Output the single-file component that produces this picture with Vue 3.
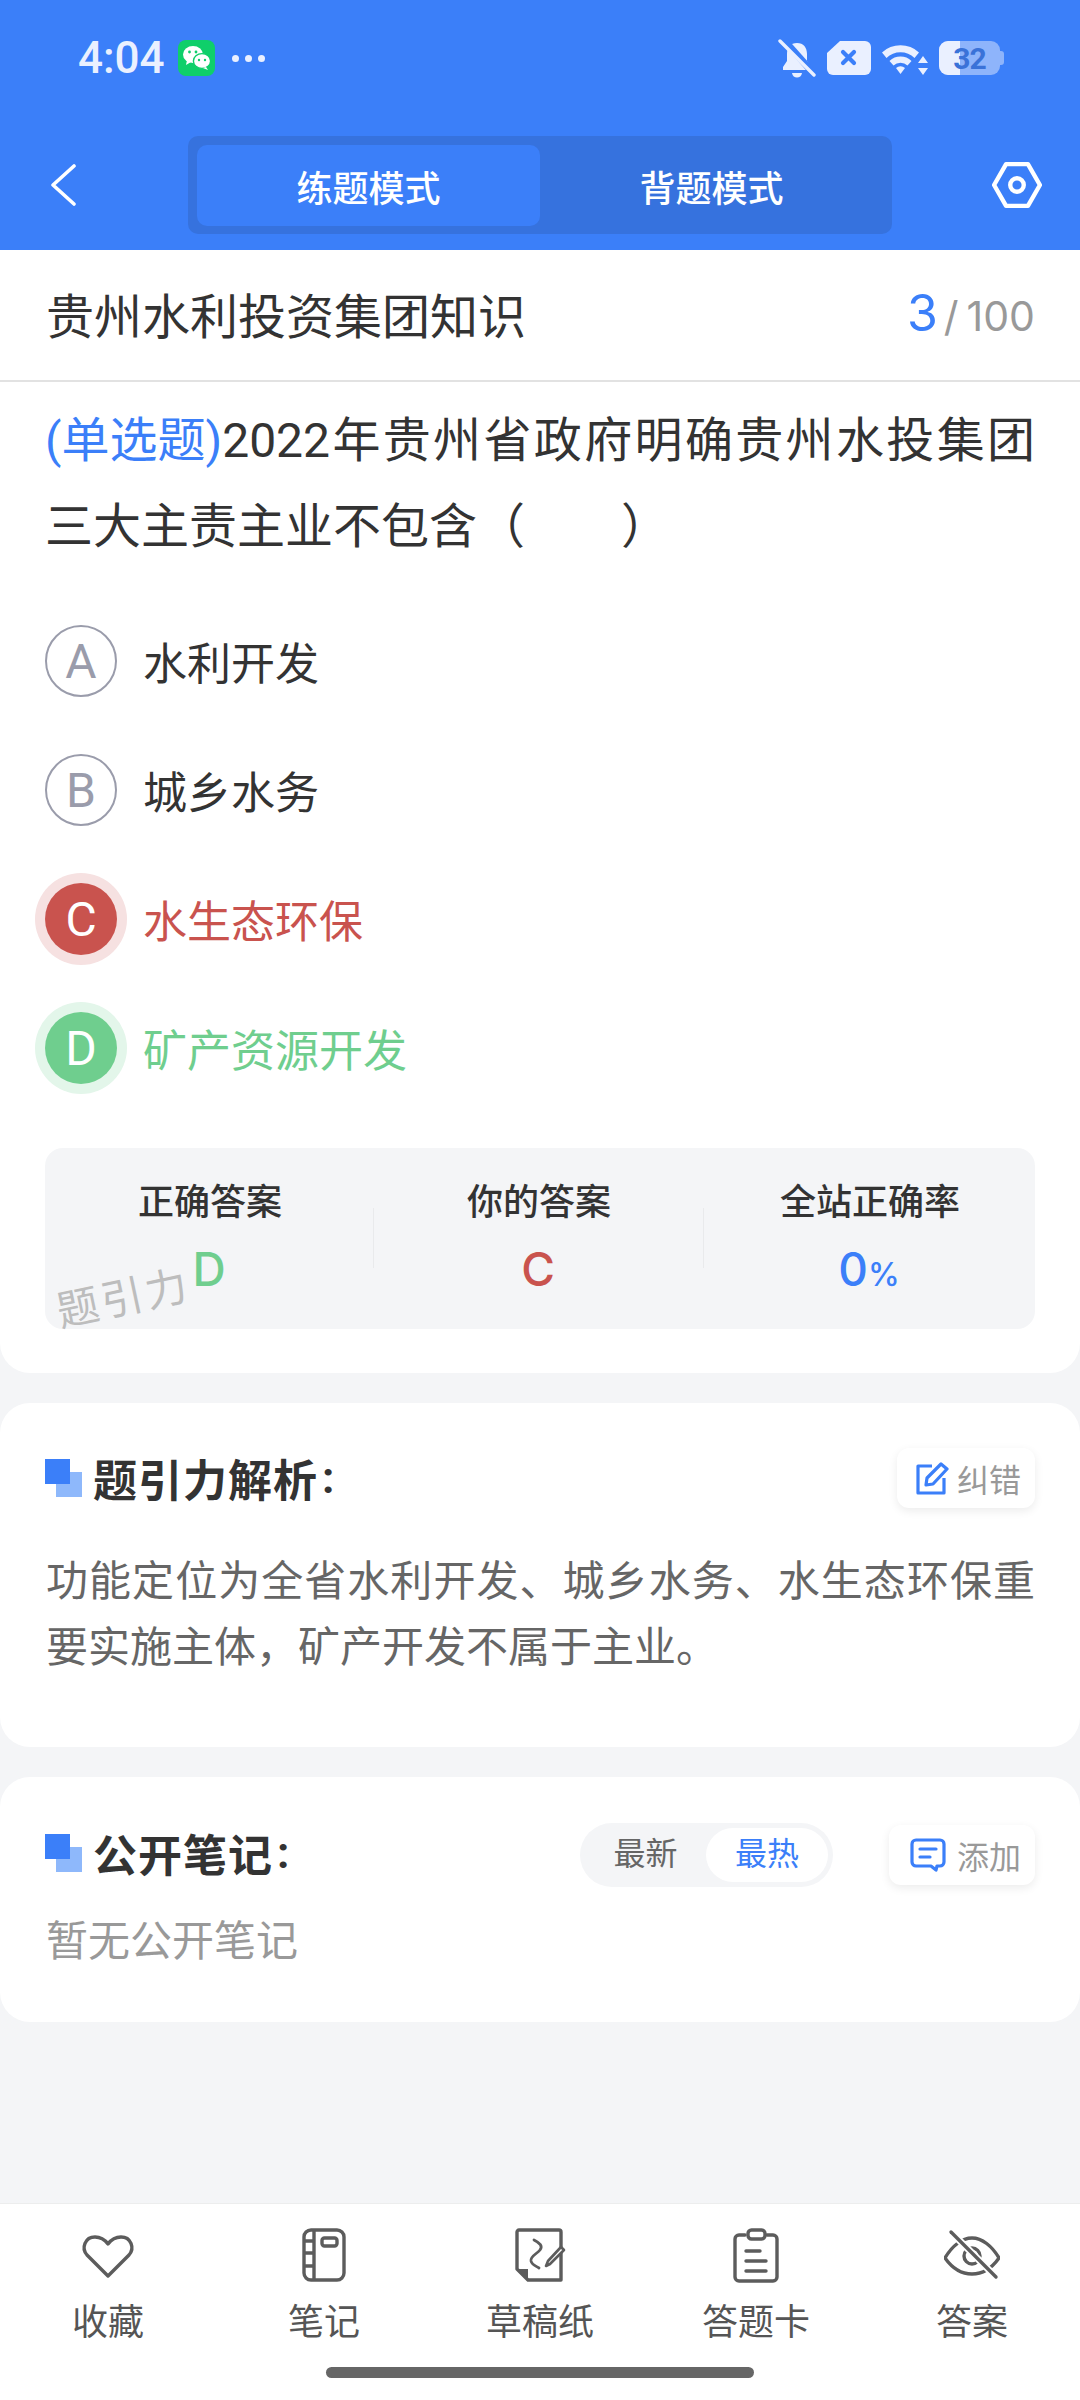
<template>
  <div class="page">
    <header class="top">
      <div class="status">
        <div class="status-left">
          <span class="time">4:04</span>
          <svg class="wechat" viewBox="0 0 37 36" width="37" height="36">
            <rect width="37" height="36" rx="8" fill="#0fcf6a" />
            <ellipse cx="15" cy="14.5" rx="10" ry="8.5" fill="#fff" />
            <path d="M9 20l-1 5 5-3z" fill="#fff" />
            <ellipse cx="24" cy="21" rx="8.6" ry="7.4" fill="#fff" stroke="#0fcf6a" stroke-width="1.4" />
            <path d="M28 27l2 3-5-2z" fill="#fff" />
            <circle cx="11.5" cy="12" r="1.4" fill="#0fcf6a" />
            <circle cx="18" cy="12" r="1.4" fill="#0fcf6a" />
            <circle cx="21" cy="20" r="1.2" fill="#0fcf6a" />
            <circle cx="27" cy="20" r="1.2" fill="#0fcf6a" />
          </svg>
          <span class="dots"><i></i><i></i><i></i></span>
        </div>
        <div class="status-right">
          <svg viewBox="0 0 38 40" width="38" height="40">
            <path d="M19 5c6.500 0 10 4.500 10 11v7l4 6v3H5v-3l4-6v-7c0-6.500 3.500-11 10-11z" fill="#eaf0ff" />
            <path d="M14 35h10c-.5 3-2.500 4.500-5 4.500s-4.500-1.500-5-4.500z" fill="#eaf0ff" />
            <path d="M4 0l33 37" stroke="#3b7ff9" stroke-width="7" />
            <path d="M2 3l34 34" stroke="#eaf0ff" stroke-width="3.400" stroke-linecap="round" />
          </svg>
          <svg viewBox="0 0 44 34" width="44" height="34">
            <path d="M13 0h25a6 6 0 0 1 6 6v22a6 6 0 0 1-6 6H6a6 6 0 0 1-6-6V12z" fill="#eaf0ff" />
            <path d="M16 11l11 11M27 11L16 22" stroke="#3b7ff9" stroke-width="4.200" stroke-linecap="round" />
          </svg>
          <svg viewBox="0 0 46 33" width="46" height="33">
            <path d="M0 10.500a27 27 0 0 1 37 0l-4.500 5.500a20 20 0 0 0-28 0z" fill="#eaf0ff" />
            <path d="M7.500 19a16 16 0 0 1 22 0l-4 4.500a10 10 0 0 0-14 0z" fill="#eaf0ff" />
            <path d="M14 26a7 7 0 0 1 9 0l-4.500 6z" fill="#eaf0ff" />
            <path d="M41 14l5 7h-10zM41 33l-5-7h10z" fill="#eaf0ff" />
          </svg>
          <div class="battery">
            <div class="battery-body">
              <div class="battery-fill"></div>
              <span>32</span>
            </div>
            <div class="battery-nub"></div>
          </div>
        </div>
      </div>
      <nav class="nav">
        <svg class="back" viewBox="0 0 26 42" width="26" height="42">
          <path d="M24 2L3 21l21 19" fill="none" stroke="#fff" stroke-width="3.600" stroke-linecap="round" stroke-linejoin="round" />
        </svg>
        <div class="seg">
          <div class="seg-item on">练题模式</div>
          <div class="seg-item">背题模式</div>
        </div>
        <svg class="gear" viewBox="0 0 48 48" width="50" height="50">
          <path d="M13.500 4h21L46 24 34.500 44h-21L2 24z" fill="none" stroke="#fff" stroke-width="4.200" stroke-linejoin="round" />
          <circle cx="24" cy="24" r="6.500" fill="none" stroke="#fff" stroke-width="4.200" />
        </svg>
      </nav>
    </header>

    <main class="main">
      <section class="card first">
        <div class="title-row">
          <span class="title">贵州水利投资集团知识</span>
          <span class="count"><b>3</b><em>/</em>100</span>
        </div>
        <div class="q-body">
          <p class="question"><span class="q-type">(单选题)</span>2022年贵州省政府明确贵州水投集团三大主责主业不包含（　　）</p>
          <ul class="options">
            <li v-for="o in options" :key="o.key" class="option" :class="o.state">
              <span class="letter">{{ o.key }}</span>
              <span>{{ o.text }}</span>
            </li>
          </ul>
          <div class="result">
            <div class="result-col">
              <div class="result-label">正确答案</div>
              <div class="result-val green">D</div>
            </div>
            <div class="result-col">
              <div class="result-label">你的答案</div>
              <div class="result-val red">C</div>
            </div>
            <div class="result-col">
              <div class="result-label">全站正确率</div>
              <div class="result-val blue">0<small>%</small></div>
            </div>
            <span class="mark">题引力</span>
          </div>
        </div>
      </section>

      <section class="card analysis">
        <div class="head">
          <h2 class="heading"><span class="squares"></span>题引力解析<span class="colon">:</span></h2>
          <div class="chip">
            <svg viewBox="0 0 34 34" width="34" height="34">
              <path d="M17 5H3v27h26V17" fill="none" stroke="#3b7ff9" stroke-width="3.200" stroke-linejoin="round" />
              <path d="M11 24l1-7L26 3l6 5-14 15z" fill="none" stroke="#3b7ff9" stroke-width="3.200" stroke-linejoin="round" />
            </svg>
            纠错
          </div>
        </div>
        <p class="text">功能定位为全省水利开发、城乡水务、水生态环保重要实施主体，矿产开发不属于主业。</p>
      </section>

      <section class="card notes">
        <div class="head">
          <h2 class="heading"><span class="squares"></span>公开笔记<span class="colon">:</span></h2>
          <div class="head-right">
            <div class="sort">
              <span class="sort-item">最新</span>
              <span class="sort-item on">最热</span>
            </div>
            <div class="chip wide">
              <svg viewBox="0 0 36 34" width="36" height="34">
                <path d="M6 2h24a4 4 0 0 1 4 4v18a4 4 0 0 1-4 4h-3l-1 4-5-4H6a4 4 0 0 1-4-4V6a4 4 0 0 1 4-4z" fill="none" stroke="#3b7ff9" stroke-width="3.200" stroke-linejoin="round" />
                <path d="M10 11h16M10 19h10" stroke="#3b7ff9" stroke-width="3.200" stroke-linecap="round" />
              </svg>
              添加
            </div>
          </div>
        </div>
        <p class="empty">暂无公开笔记</p>
      </section>
    </main>

    <footer class="bottom">
      <div class="tabs">
        <div class="tab">
          <svg viewBox="0 0 56 56" width="56" height="56">
            <path d="M28 48L7 27C1 20 5 9 15 9c6 0 10 3 13 7 3-4 7-7 13-7 10 0 14 11 8 18z" fill="none" stroke="#5c5c5c" stroke-width="3.400" stroke-linejoin="round" />
          </svg>
          <span>收藏</span>
        </div>
        <div class="tab">
          <svg viewBox="0 0 56 56" width="56" height="56">
            <rect x="8" y="2" width="40" height="50" rx="7" fill="none" stroke="#5c5c5c" stroke-width="3.400" />
            <path d="M18 2v50M8 13h10M8 25h10M8 38h10" stroke="#5c5c5c" stroke-width="3.400" />
            <rect x="26" y="10" width="15" height="8" rx="2.500" fill="none" stroke="#5c5c5c" stroke-width="3.400" />
          </svg>
          <span>笔记</span>
        </div>
        <div class="tab">
          <svg viewBox="0 0 56 56" width="56" height="56">
            <path d="M7 2h40a2 2 0 0 1 2 2v48H16L5 41V4a2 2 0 0 1 2-2z" fill="none" stroke="#5c5c5c" stroke-width="3.400" stroke-linejoin="round" />
            <path d="M5 41h11v11z" fill="#5c5c5c" />
            <path d="M22 12c6 3 9 6 6 10-3 4-10 6-9 11 1 4 5 5 8 7" fill="none" stroke="#5c5c5c" stroke-width="2.800" stroke-linecap="round" />
            <path d="M34 38l2-5 13-14 3 3-14 14z" fill="#fff" stroke="#5c5c5c" stroke-width="2.600" stroke-linejoin="round" />
          </svg>
          <span>草稿纸</span>
        </div>
        <div class="tab">
          <svg viewBox="0 0 56 56" width="56" height="56">
            <path d="M17 7h-6a4 4 0 0 0-4 4v38a4 4 0 0 0 4 4h34a4 4 0 0 0 4-4V11a4 4 0 0 0-4-4h-6" fill="none" stroke="#5c5c5c" stroke-width="3.400" stroke-linecap="round" />
            <rect x="20" y="2" width="17" height="9" rx="3.500" fill="none" stroke="#5c5c5c" stroke-width="3.400" />
            <path d="M18 23h14M18 33h20M18 43h20" stroke="#5c5c5c" stroke-width="3.400" stroke-linecap="round" />
          </svg>
          <span>答题卡</span>
        </div>
        <div class="tab">
          <svg viewBox="0 0 56 56" width="56" height="56">
            <path d="M1 30C8 18 18 10 28 10s20 8 27 20c-7 10-17 16-27 16S8 40 1 30z" fill="none" stroke="#5c5c5c" stroke-width="3.400" stroke-linejoin="round" />
            <circle cx="28" cy="28" r="8" fill="none" stroke="#5c5c5c" stroke-width="3.400" />
            <path d="M9 6l43 43" stroke="#fff" stroke-width="7" />
            <path d="M7 4l45 45" stroke="#5c5c5c" stroke-width="3.400" stroke-linecap="round" />
          </svg>
          <span>答案</span>
        </div>
      </div>
      <div class="home-bar"></div>
    </footer>
  </div>
</template>

<script setup>
const options = [
  { key: 'A', text: '水利开发', state: '' },
  { key: 'B', text: '城乡水务', state: '' },
  { key: 'C', text: '水生态环保', state: 'wrong' },
  { key: 'D', text: '矿产资源开发', state: 'right' }
]
</script>

<style>
html, body { margin: 0; padding: 0; }
</style>

<style scoped>
.page {
  width: 1080px;
  height: 2400px;
  display: flex;
  flex-direction: column;
  background: #f4f5f7;
  font-family: Roboto, "Noto Sans CJK SC", sans-serif;
  color: #333;
  overflow: hidden;
}
.top {
  height: 250px;
  background: #3b7ff9;
  flex: none;
}
.status {
  height: 116px;
  padding: 0 76px 0 78px;
  display: flex;
  align-items: center;
  justify-content: space-between;
}
.status-left,
.status-right {
  display: flex;
  align-items: center;
}
.time {
  font-size: 44px;
  font-weight: 500;
  color: #eaf0ff;
  width: 100px;
}
.wechat { display: block; }
.dots {
  display: flex;
  gap: 6px;
  margin-left: 17px;
}
.dots i {
  width: 7px;
  height: 7px;
  border-radius: 50%;
  background: #eaf0ff;
}
.status-right { gap: 11px; }
.battery {
  width: 65px;
  display: flex;
  align-items: center;
}
.battery-body {
  position: relative;
  width: 61px;
  height: 34px;
  flex: none;
  border-radius: 9px;
  background: #8eb4fb;
  overflow: hidden;
  font-size: 30px;
  font-weight: 700;
  color: #3a72d8;
  display: flex;
  align-items: center;
  justify-content: center;
}
.battery-nub {
  width: 4px;
  height: 14px;
  border-radius: 0 3px 3px 0;
  background: #8eb4fb;
}
.battery-fill {
  position: absolute;
  left: 0;
  top: 0;
  bottom: 0;
  width: 21px;
  background: #eaf0ff;
}
.battery span {
  position: relative;
  letter-spacing: -1px;
}
.nav {
  margin-top: 20px;
  height: 98px;
  display: flex;
  align-items: center;
  padding: 0 38px 0 50px;
}
.back { display: block; }
.seg {
  width: 704px;
  height: 98px;
  margin-left: 112px;
  margin-right: auto;
  box-sizing: border-box;
  padding: 9px 9px 8px;
  background: #3672de;
  border-radius: 10px;
  display: flex;
}
.seg-item {
  flex: 1;
  display: flex;
  align-items: center;
  justify-content: center;
  font-size: 36px;
  font-weight: 500;
  color: #fff;
  border-radius: 10px;
}
.seg-item.on { background: #3b7ff9; }
.main {
  flex: 1;
  display: flex;
  flex-direction: column;
  gap: 30px;
}
.card {
  background: #fff;
  border-radius: 30px;
}
.first {
  height: 1123px;
  border-radius: 0 0 30px 30px;
}
.title-row {
  height: 132px;
  box-sizing: border-box;
  padding: 0 45px 4px 46px;
  border-bottom: 2px solid #e2e2e2;
  display: flex;
  align-items: center;
  justify-content: space-between;
}
.title {
  font-size: 48px;
  color: #333;
}
.count {
  font-family: Inter, sans-serif;
  font-size: 41px;
  color: #999;
  display: flex;
  align-items: baseline;
}
.count b {
  font-size: 50px;
  font-weight: 400;
  color: #3b7ff9;
}
.count em {
  font-style: normal;
  margin: 0 8px 0 6px;
}
.q-body { padding: 16px 45px 0; }
.question {
  margin: 0;
  font-size: 48px;
  line-height: 86px;
  text-align: justify;
}
.q-type {
  display: inline-block;
  color: #3b7ff9;
}
.options {
  list-style: none;
  margin: 55px 0 0;
  padding: 0;
  display: flex;
  flex-direction: column;
  gap: 57px;
}
.option {
  height: 72px;
  display: flex;
  align-items: center;
  gap: 26px;
  font-size: 44px;
  color: #333;
}
.letter {
  width: 72px;
  height: 72px;
  flex: none;
  box-sizing: border-box;
  border: 2px solid #9a9cab;
  border-radius: 50%;
  display: flex;
  align-items: center;
  justify-content: center;
  font-size: 48px;
  color: #9a9cab;
}
.wrong { color: #c9534e; }
.wrong .letter {
  background: #c9534e;
  border: none;
  color: #fff;
  box-shadow: 0 0 0 10px #f6e1e1;
}
.right { color: #6fce8e; }
.right .letter {
  background: #6fce8e;
  border: none;
  color: #fff;
  box-shadow: 0 0 0 10px #e3f6ea;
}
.result {
  position: relative;
  margin-top: 64px;
  height: 181px;
  background: #f4f5f7;
  border-radius: 18px;
  display: grid;
  grid-template-columns: 328px 330px 332px;
}
.result-col {
  position: relative;
  text-align: center;
  padding-top: 29px;
}
.result-col + .result-col::before {
  content: "";
  position: absolute;
  left: 0;
  top: 60px;
  height: 60px;
  width: 1px;
  background: #e9eaec;
}
.result-label {
  padding-left: 2px;
  font-size: 36px;
  font-weight: 500;
  line-height: 52px;
  color: #333;
}
.result-val {
  margin-top: 12px;
  font-family: Inter, sans-serif;
  font-size: 46px;
  font-weight: 500;
  line-height: 56px;
}
.result-val small { font-size: 32px; }
.green { color: #6fce8e; }
.red { color: #c9534e; }
.blue { color: #3b7ff9; }
.mark {
  position: absolute;
  left: 11px;
  bottom: 5px;
  font-size: 42px;
  line-height: 50px;
  color: #bdbdbd;
  letter-spacing: 3px;
  transform: rotate(-12deg);
}
.analysis { height: 344px; padding: 45px 45px 0 46px; box-sizing: border-box; }
.notes { height: 245px; padding: 46px 45px 0 46px; box-sizing: border-box; }
.head {
  height: 60px;
  display: flex;
  align-items: center;
  justify-content: space-between;
}
.heading {
  margin: 0 0 0 -1px;
  display: flex;
  align-items: center;
  font-size: 44px;
  font-weight: 700;
  letter-spacing: 1px;
  color: #333;
}
.colon { margin-left: 4px; }
.squares {
  position: relative;
  width: 37px;
  height: 38px;
  margin-right: 11px;
  flex: none;
  background: linear-gradient(#8eb8fb, #8eb8fb) 11px 13px / 26px 25px no-repeat;
}
.squares::before {
  content: "";
  position: absolute;
  left: 0;
  top: 0;
  width: 25px;
  height: 25px;
  background: #3b7ff9;
}
.head-right {
  display: flex;
  align-items: center;
  gap: 56px;
  margin-top: 3px;
}
.chip {
  height: 60px;
  padding: 0 14px 0 18px;
  display: flex;
  align-items: center;
  gap: 8px;
  background: #fff;
  border-radius: 12px;
  box-shadow: 0 3px 10px rgba(0, 0, 0, 0.08);
  font-size: 32px;
  color: #999;
}
.chip.wide {
  padding-left: 21px;
  gap: 11px;
}
.text {
  margin: 41px 0 0;
  font-size: 42px;
  line-height: 66px;
  color: #666;
  text-align: justify;
}
.sort {
  width: 253px;
  height: 64px;
  box-sizing: border-box;
  padding: 5px;
  background: #f4f5f7;
  border-radius: 32px;
  display: flex;
  align-items: center;
}
.sort-item {
  flex: 1;
  height: 54px;
  line-height: 52px;
  text-align: center;
  font-size: 32px;
  color: #666;
  border-radius: 27px;
}
.sort-item.on {
  flex: none;
  width: 122px;
  background: #fff;
  color: #3b7ff9;
}
.empty {
  margin: 26px 0 0;
  font-size: 42px;
  line-height: 66px;
  color: #999;
}
.bottom {
  height: 197px;
  flex: none;
  background: #fff;
  border-top: 1px solid #eceded;
  box-sizing: border-box;
}
.tabs {
  display: grid;
  grid-template-columns: repeat(5, 216px);
  padding-top: 24px;
}
.tab {
  display: flex;
  flex-direction: column;
  align-items: center;
  font-size: 36px;
  line-height: 50px;
  color: #555;
}
.tab svg {
  display: block;
  margin-bottom: 14px;
}
.home-bar {
  width: 428px;
  height: 11px;
  margin: 19px auto 0;
  border-radius: 6px;
  background: #666;
}
</style>
